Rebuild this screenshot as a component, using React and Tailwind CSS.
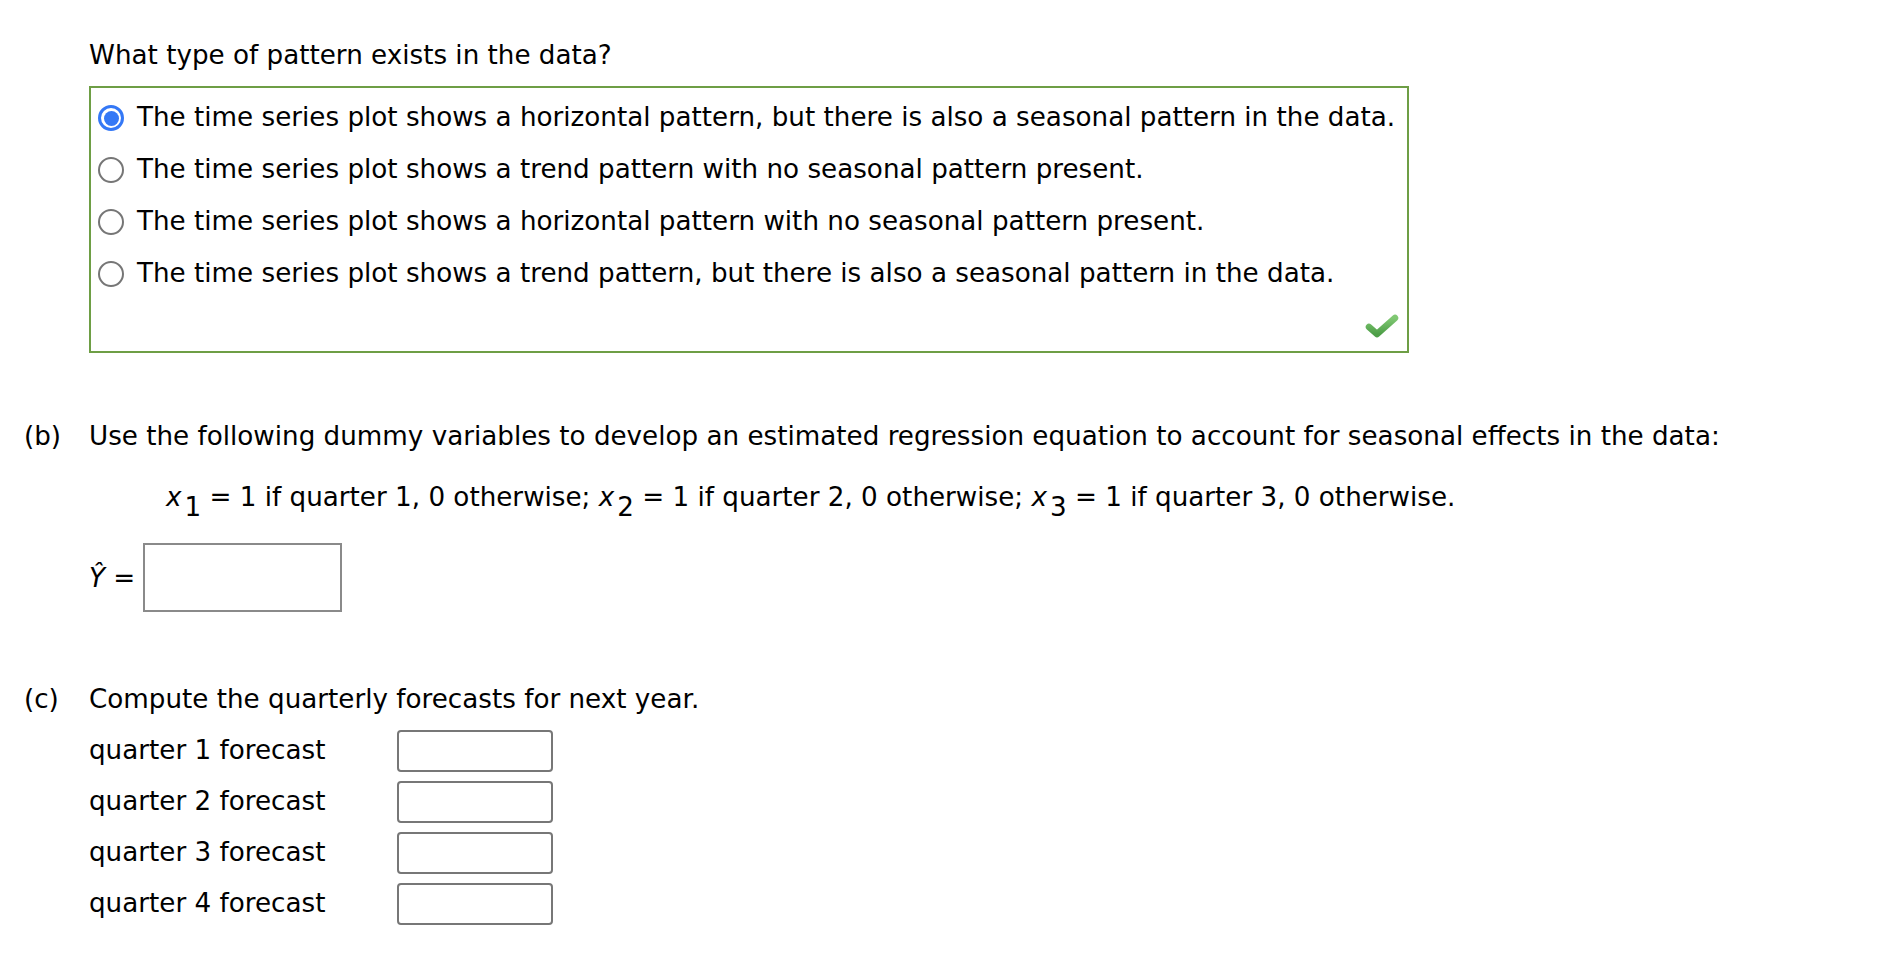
const options = [
  { text: 'The time series plot shows a horizontal pattern, but there is also a seasonal pattern in the data.', checked: true },
  { text: 'The time series plot shows a trend pattern with no seasonal pattern present.', checked: false },
  { text: 'The time series plot shows a horizontal pattern with no seasonal pattern present.', checked: false },
  { text: 'The time series plot shows a trend pattern, but there is also a seasonal pattern in the data.', checked: false },
]

function Radio({ checked }) {
  if (checked) {
    return (
      <span className="w-[26px] h-[26px] rounded-full border-[3px] border-[#3478f6] bg-white flex items-center justify-center flex-shrink-0">
        <span className="w-[15px] h-[15px] rounded-full bg-[#3478f6]" />
      </span>
    )
  }
  return <span className="w-[26px] h-[26px] rounded-full border-2 border-[#767676] bg-white flex-shrink-0" />
}

function Check() {
  return (
    <svg width="34" height="26" viewBox="0 0 34 26">
      <defs>
        <linearGradient id="chk" x1="0" y1="0" x2="0" y2="1">
          <stop offset="0" stopColor="#80c873" />
          <stop offset="1" stopColor="#4d9e47" />
        </linearGradient>
      </defs>
      <path d="M4 14 L12 21 L30 5" fill="none" stroke="url(#chk)" strokeWidth="6.5" strokeLinecap="round" strokeLinejoin="round" />
    </svg>
  )
}

function Sub({ children }) {
  return <span className="relative top-[10px] ml-[3px]">{children}</span>
}

export default function App() {
  return (
    <div className="min-h-screen bg-white text-black text-[26.2px] pt-[40px]" style={{ fontFamily: '"DejaVu Sans", Verdana, sans-serif' }}>
      <div className="pl-[89px]">
        <p className="leading-[30px]">What type of pattern exists in the data?</p>

        <div className="mt-[16px] w-[1320px] h-[267px] border-2 border-[#6e9e45] flex flex-col pl-[7px] pt-[4px] pr-[8px] pb-[12px]">
          {options.map((o, i) => (
            <label key={i} className="flex items-center gap-[13px] h-[52px]">
              <Radio checked={o.checked} />
              <span>{o.text}</span>
            </label>
          ))}
          <div className="flex-1 flex items-end justify-end">
            <Check />
          </div>
        </div>
      </div>

      <div className="mt-[68px] flex">
        <span className="w-[89px] pl-[24px] flex-shrink-0 leading-[30px]">(b)</span>
        <div className="flex flex-col">
          <p className="leading-[30px]">Use the following dummy variables to develop an estimated regression equation to account for seasonal effects in the data:</p>
          <p className="mt-[31px] ml-[77px] leading-[30px]">
            <i>x</i><Sub>1</Sub> = 1 if quarter 1, 0 otherwise; <i>x</i><Sub>2</Sub> = 1 if quarter 2, 0 otherwise; <i>x</i><Sub>3</Sub> = 1 if quarter 3, 0 otherwise.
          </p>
          <div className="mt-[31px] flex items-center gap-[8px]">
            <span className="leading-[30px]"><i>Ŷ</i> =</span>
            <div className="w-[199px] h-[69px] border-2 border-[#8a8a8a] bg-white" />
          </div>
        </div>
      </div>

      <div className="mt-[72px] flex">
        <span className="w-[89px] pl-[24px] flex-shrink-0 leading-[30px]">(c)</span>
        <div className="flex flex-col">
          <p className="leading-[30px]">Compute the quarterly forecasts for next year.</p>
          <div className="mt-[16px] grid grid-cols-[308px_156px] gap-y-[9px] items-center">
            {[1, 2, 3, 4].map((q) => (
              <div key={q} className="contents">
                <span>quarter {q} forecast</span>
                <div className="w-[156px] h-[42px] border-2 border-[#777] rounded-[4px] bg-white" />
              </div>
            ))}
          </div>
        </div>
      </div>
    </div>
  )
}
